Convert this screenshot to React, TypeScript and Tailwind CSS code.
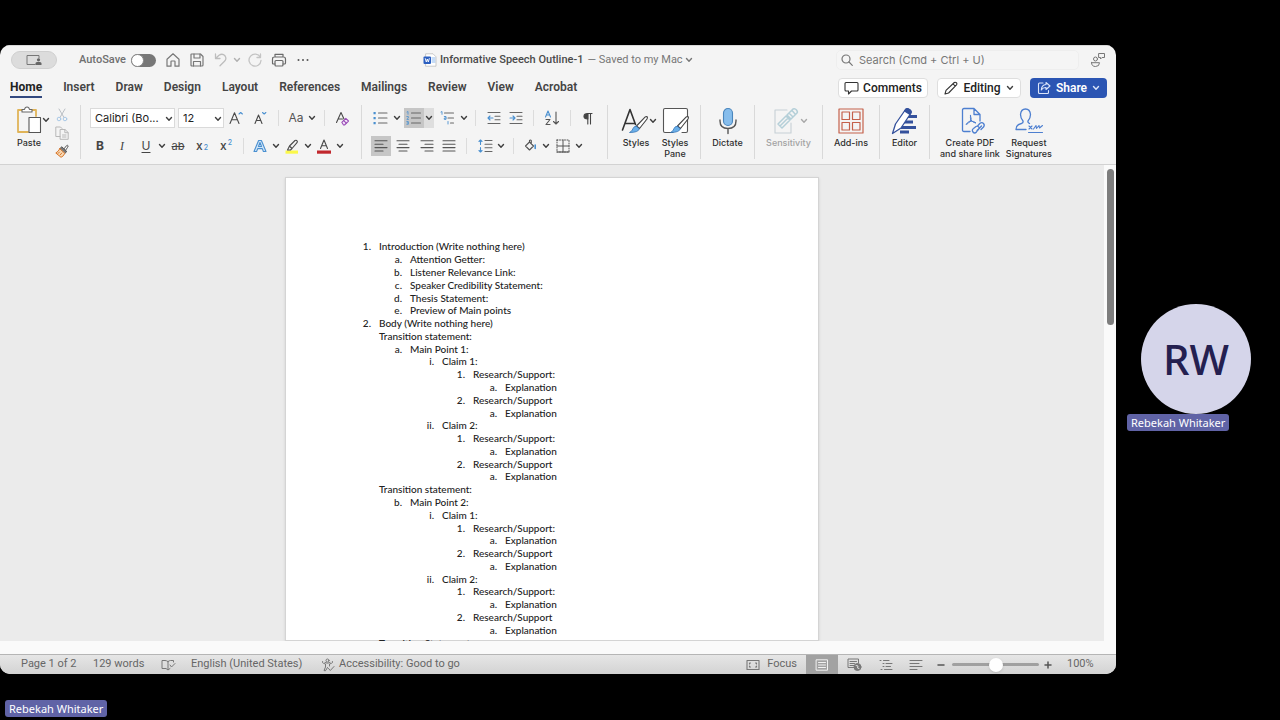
import type { ReactNode } from "react";

type IconProps = { w?: number; h?: number; box?: string; children: ReactNode; color?: string; sw?: number };

function Svg({ w = 16, h = 16, box, children, color = "#4a4a4a", sw = 1.1 }: IconProps) {
  return (
    <svg
      width={w}
      height={h}
      viewBox={box ?? `0 0 ${w} ${h}`}
      fill="none"
      stroke={color}
      strokeWidth={sw}
      strokeLinecap="round"
      strokeLinejoin="round"
      className="shrink-0"
      aria-hidden="true"
    >
      {children}
    </svg>
  );
}

function Chevron({ color = "#3f3f3f" }: { color?: string }) {
  return (
    <Svg w={8} h={6} color={color} sw={1.4}>
      <path d="M1.5 1.5 4 4.2 6.5 1.5" />
    </Svg>
  );
}

function Tool({ label, className, children }: { label: string; className: string; children: ReactNode }) {
  return (
    <button type="button" aria-label={label} className={`flex h-5 shrink-0 items-center justify-center ${className}`}>
      {children}
    </button>
  );
}

function Sep({ className }: { className: string }) {
  return (
    <span className={`flex shrink-0 justify-center ${className}`}>
      <span className="h-4 w-px bg-[#dcdcdc]" />
    </span>
  );
}

function Group({ className, children }: { className: string; children: ReactNode }) {
  return <div className={`flex shrink-0 border-r border-[#d9d9d9] ${className}`}>{children}</div>;
}

function BigButton({ lines, icon, className = "", muted = false, chevron = false }: {
  lines: string[];
  icon: ReactNode;
  className?: string;
  muted?: boolean;
  chevron?: boolean;
}) {
  return (
    <button
      type="button"
      className={`flex flex-col items-center text-[9px] leading-[11px] font-medium ${muted ? "text-[#a3a3a3]" : "text-[#2f2f2f]"} ${className}`}
    >
      <span className="flex h-8 items-center gap-px">
        {chevron && <span className="w-1" />}
        {icon}
        {chevron && <Chevron color={muted ? "#a8a8a8" : "#3f3f3f"} />}
      </span>
      <span className="flex flex-col whitespace-nowrap">
        {lines.map((l) => (
          <span key={l}>{l}</span>
        ))}
      </span>
    </button>
  );
}

const BLUE = "#4a90d0";

function AlignIcon({ rows }: { rows: [number, number][] }) {
  return (
    <Svg w={14} h={14} color="#555" sw={1.1}>
      {rows.map(([a, b], i) => (
        <path key={i} d={`M${a} ${1.8 + i * 3.4}H${b}`} />
      ))}
    </Svg>
  );
}

function TitleBar() {
  return (
    <div className="flex h-[28px] items-center">
      <div className="flex w-[423px] shrink-0 items-center pl-[11px]">
        <button type="button" aria-label="Presenter view" className="flex h-[18px] w-[46px] items-center justify-center rounded-full border border-[#cfcfcf] bg-[#dcdcdc]">
          <Svg w={18} h={12} color="#777" sw={1}>
            <path d="M10 10.5H2V1.5H14V4" />
            <circle cx="13.5" cy="5.8" r="1.6" fill="#666" stroke="none" />
            <path d="M10.5 11V9.6Q10.5 8 12 8H15Q16.500 8 16.500 9.600V11Z" fill="#666" stroke="none" />
          </Svg>
        </button>
        <span className="ml-[22px] w-[45px] text-[11px] font-medium whitespace-nowrap text-[#6f6f6f]">AutoSave</span>
        <button type="button" role="switch" aria-checked="false" aria-label="AutoSave" className="ml-[7px] flex h-[13px] w-[25px] items-center rounded-full bg-[#777]">
          <span className="size-[13px] rounded-full border border-[#888] bg-white" />
        </button>
        <Tool label="Home screen" className="ml-[5px] w-6">
          <Svg color="#777" sw={1.2}>
            <path d="M2 7.200 8 1.800 14 7.200V14.200H10V9.600Q10 9 9.400 9H6.600Q6 9 6 9.600V14.200H2Z" />
          </Svg>
        </Tool>
        <Tool label="Save" className="w-6">
          <Svg color="#777" sw={1.2}>
            <path d="M2.500 2H11.500L14 4.500V13Q14 14 13 14H3Q2 14 2 13V2.500Q2 2 2.500 2Z" />
            <path d="M5 2V6H11V2M4.500 14V9.500H11.500V14" />
          </Svg>
        </Tool>
        <Tool label="Undo" className="w-6">
          <Svg color="#bdbdbd" sw={1.3}>
            <path d="M2.500 2V6.500H7M2.800 6.200 6 3.200Q9.500 1 12 3.800 14 6.700 11.500 9.200L7 13.800" />
          </Svg>
        </Tool>
        <Tool label="Undo history" className="w-2">
          <Chevron color="#b0b0b0" />
        </Tool>
        <Tool label="Redo" className="ml-[2px] w-6">
          <Svg color="#c4c4c4" sw={1.3}>
            <path d="M13.500 2V5.500H10M13.300 5.300A6 6 0 1 0 14 8.500" />
          </Svg>
        </Tool>
        <Tool label="Print" className="w-6">
          <Svg color="#6a6a6a" sw={1.2}>
            <path d="M4 5V2.300H12V5M4 12H2.500Q1.500 12 1.500 11V7Q1.500 5 3.500 5H12.500Q14.500 5 14.500 7V11Q14.500 12 13.500 12H12" />
            <rect x="4" y="8.500" width="8" height="5.500" rx="1" />
          </Svg>
        </Tool>
        <Tool label="More" className="w-6">
          <Svg w={12} h={4} color="#555">
            <g fill="#555" stroke="none">
              <circle cx="1.500" cy="2" r="1" />
              <circle cx="6" cy="2" r="1" />
              <circle cx="10.500" cy="2" r="1" />
            </g>
          </Svg>
        </Tool>
      </div>
      <div className="flex flex-1 items-center text-[11px] whitespace-nowrap">
        <Svg w={14} h={14} sw={0.7} color="#b5b5b5">
          <path d="M3 .8H10L13 3.800V13.200H3Z" fill="#fff" />
          <path d="M9 5H12M9 7H12M9 9H12" stroke="#5b9be6" />
          <rect x="0.500" y="3.500" width="7.500" height="7.500" rx="1" fill="#2b5fc0" stroke="none" />
          <path d="M2.300 5.600 3.300 9 4.300 6 5.300 9 6.300 5.600" stroke="#fff" strokeWidth="0.900" />
        </Svg>
        <h1 className="ml-[3px] font-medium text-[#4a4a4a]">Informative Speech Outline-1</h1>
        <button type="button" className="ml-1 flex items-center gap-[2px] text-[#777]">
          — Saved to my Mac
          <Chevron color="#777" />
        </button>
      </div>
      <label className="flex h-5 w-[243px] shrink-0 items-center gap-[6px] rounded-[5px] border border-[#eeeeee] bg-[#f5f5f5] px-1">
        <Svg w={12} h={12} color="#777" sw={1.2}>
          <circle cx="5" cy="5" r="4" />
          <path d="m8 8 3.300 3.300" />
        </Svg>
        <input
          type="search"
          aria-label="Search"
          placeholder="Search (Cmd + Ctrl + U)"
          className="min-w-0 flex-1 bg-transparent font-[Inter,sans-serif] text-[11px] outline-none placeholder:text-[#777]"
        />
      </label>
      <Tool label="Account" className="mr-[6px] ml-[7px] w-6">
        <Svg color="#777" sw={1}>
          <circle cx="5.500" cy="7" r="2" />
          <path d="M1.500 10.700H9.500Q9.500 14.500 5.500 14.500T1.500 10.700ZM9 1.500H14.500V5.500H12L10.500 7V5.500H9Z" />
        </Svg>
      </Tool>
    </div>
  );
}

const tabs = ["Home", "Insert", "Draw", "Design", "Layout", "References", "Mailings", "Review", "View", "Acrobat"];

function TabBar() {
  return (
    <div className="flex h-[27px] items-center justify-between pr-[9px] pl-[10px]">
      <nav className="flex gap-[21px] text-[12px] font-semibold text-[#444]">
        {tabs.map((t, i) => (
          <a
            key={t}
            href={`#${t.toLowerCase()}`}
            className={`flex h-[21px] items-center border-b-2 ${i === 0 ? "border-[#33497f] font-bold text-[#222]" : "border-transparent"}`}
          >
            {t}
          </a>
        ))}
      </nav>
      <div className="flex gap-[9px] text-[12px] font-medium text-[#222]">
        <button type="button" className="flex h-5 w-[90px] items-center justify-center gap-[4px] rounded-[4px] border border-[#dedede] bg-white">
          <Svg w={15} h={14} color="#333">
            <path d="M2 1.500H13Q14 1.500 14 2.500V9Q14 10 13 10H7.500L4.500 13V10H2Q1 10 1 9V2.500Q1 1.500 2 1.500Z" />
          </Svg>
          Comments
        </button>
        <button type="button" className="flex h-5 w-[84px] items-center justify-center gap-[5px] rounded-[4px] border border-[#dedede] bg-white">
          <Svg w={14} h={14} color="#333">
            <path d="M1 13 2 9.300 10.300 1.500Q11.300 .8 12.400 1.700 13.300 2.800 12.500 3.800L4.600 12ZM9 2.800 11.300 5.100" />
          </Svg>
          Editing
          <Chevron />
        </button>
        <button type="button" className="flex h-5 w-[77px] items-center justify-center gap-[5px] rounded-[4px] bg-[#2b55b3] font-semibold text-white">
          <Svg w={14} h={14} color="#dbe5fa">
            <path d="M6 2H2.500Q1.500 2 1.500 3V11.500Q1.500 12.500 2.500 12.500H10.500Q11.500 12.500 11.500 11.500V9.500" />
            <path d="M9 1.500 13 5 9 8.500V6.500Q6 6.300 4.300 9 4.500 4 9 3.500Z" />
          </Svg>
          Share
          <Chevron color="#dbe5fa" />
        </button>
      </div>
    </div>
  );
}

function FontGroup() {
  return (
    <Group className="w-[281px] flex-col gap-2 pt-[3px] pl-[9px]">
      <div className="flex h-5 items-center">
        <div className="relative flex h-5">
          <select aria-label="Font" className="h-5 w-[85px] appearance-none border border-[#dadada] bg-white pl-1 text-[11px] text-[#222]">
            <option>Calibri (Bo...</option>
          </select>
          <span className="pointer-events-none absolute top-[8px] right-[2px]">
            <Chevron />
          </span>
        </div>
        <div className="relative ml-[3px] flex h-5">
          <select aria-label="Font size" className="h-5 w-[46px] appearance-none border border-[#dadada] bg-white pl-1 text-[11px] text-[#222]">
            <option>12</option>
          </select>
          <span className="pointer-events-none absolute top-[8px] right-[2px]">
            <Chevron />
          </span>
        </div>
        <Tool label="Grow font" className="w-6">
          <Svg w={14} h={14}>
            <path d="M1 12.500 5.500 1.800 10 12.500M2.600 8.800H8.400" />
            <path d="m10 3 1.700-1.500L13.400 3" stroke={BLUE} />
          </Svg>
        </Tool>
        <Tool label="Shrink font" className="w-6">
          <Svg w={14} h={14}>
            <path d="M2 12.500 5.500 4 9 12.500M3.300 9.500H7.700" />
            <path d="m9.500 1.500 1.700 1.500 1.700-1.500" stroke={BLUE} />
          </Svg>
        </Tool>
        <Sep className="w-3" />
        <Tool label="Change case" className="w-6 text-[12px] text-[#555]">Aa</Tool>
        <Tool label="Case options" className="w-2"><Chevron /></Tool>
        <Sep className="w-4" />
        <Tool label="Clear formatting" className="w-5">
          <Svg w={15} h={15}>
            <path d="M1.500 11.500 6 1.500 9 8M3 8H7.500" />
            <path d="m6.800 11.300 4-4 2.700 2.700-4 4H8.500Z" stroke="#9b4fb8" fill="#f6e9fb" />
            <path d="m8.600 9.500 2.700 2.700" stroke="#9b4fb8" />
          </Svg>
        </Tool>
      </div>
      <div className="flex h-5 items-center text-[12px] text-[#444]">
        <Tool label="Bold" className="w-5 font-bold">B</Tool>
        <Tool label="Italic" className="w-6 font-[Liberation_Serif,serif] italic">I</Tool>
        <Tool label="Underline" className="w-6 underline underline-offset-2">U</Tool>
        <Tool label="Underline style" className="w-2"><Chevron /></Tool>
        <Tool label="Strikethrough" className="w-6 text-[11px] line-through">ab</Tool>
        <Tool label="Subscript" className="w-6 gap-px font-medium">x<sub className="text-[7px] text-[#4a90d0]">2</sub></Tool>
        <Tool label="Superscript" className="w-6 gap-px font-medium">x<sup className="text-[7px] text-[#4a90d0]">2</sup></Tool>
        <Sep className="w-[10px]" />
        <Tool label="Text effects" className="w-6">
          <Svg w={14} h={14} color={BLUE} sw={1.1}>
            <path d="M1 12.500 5.600 1.500H8.400L13 12.500H10.400L9.300 9.600H4.700L3.600 12.500ZM5.500 7.500H8.500L7 3.500Z" fill="#cfe4f7" />
          </Svg>
        </Tool>
        <Tool label="Text effect options" className="w-2"><Chevron /></Tool>
        <Tool label="Highlight" className="w-6">
          <Svg w={14} h={15}>
            <rect x="0.500" y="11.500" width="12.500" height="3.200" fill="#fbf84a" stroke="none" />
            <path d="M4.500 7 10 1.500Q11.500 .8 12.300 2.200 12.500 3 12 3.700L7 9.500ZM4.500 7 3.500 9 2.500 11H5.500L7 9.500" />
          </Svg>
        </Tool>
        <Tool label="Highlight colour" className="w-2"><Chevron /></Tool>
        <Tool label="Font color" className="w-6">
          <Svg w={14} h={15}>
            <path d="M3.500 9.500 7 1 10.500 9.500M4.700 6.700H9.300" />
            <rect x="0" y="11.500" width="14" height="3.200" fill="#c1272d" stroke="none" />
          </Svg>
        </Tool>
        <Tool label="Font color options" className="w-2"><Chevron /></Tool>
      </div>
    </Group>
  );
}

function ParagraphGroup() {
  return (
    <Group className="w-[246px] flex-col gap-2 pt-[3px] pl-[7px]">
      <div className="flex h-5 items-center">
        <Tool label="Bullets" className="w-6">
          <Svg w={16} h={14} color="#666">
            <path d="M5.500 2H14M5.500 7H14M5.500 12H14" />
            <path d="M.5 1H2.700V3.200H.5ZM.5 6H2.700V8.200H.5ZM.5 11H2.700V13.200H.5Z" fill={BLUE} stroke="none" />
          </Svg>
        </Tool>
        <Tool label="Bullet styles" className="w-2"><Chevron /></Tool>
        <Tool label="Numbering" className="ml-[3px] w-5 bg-[#c6c6c6]">
          <Svg w={16} h={14} color="#666">
            <path d="M5.500 2H14.500M5.500 7H14.500M5.500 12H14.500" />
            <path d="M1 1 2 .5V3.300M.8 5.500H2.300V7L.8 8.400H2.500M.8 10.500H2.300V13.300H.8M1.200 11.900H2.300" stroke={BLUE} strokeWidth="0.800" />
          </Svg>
        </Tool>
        <Tool label="Number styles" className="w-[10px] bg-[#dedede]"><Chevron /></Tool>
        <Tool label="Multilevel list" className="ml-[2px] w-6">
          <Svg w={16} h={14} color="#666">
            <path d="M4.500 2H13.500M8 7H13.500M10.500 12H13.500" />
            <path d="M1 1 2 .5V3.300M4.300 5.500H6V8.400H4.300V7H6M8 10.500V13" stroke={BLUE} strokeWidth="0.900" />
          </Svg>
        </Tool>
        <Tool label="Multilevel styles" className="w-2"><Chevron /></Tool>
        <Sep className="w-[14px]" />
        <Tool label="Decrease indent" className="w-6">
          <Svg w={14} h={14} color="#666">
            <path d="M1 1.500H13M8 5.200H13M8 8.800H13M1 12.500H13" />
            <path d="M6 7H1M3 5 1 7 3 9" stroke={BLUE} />
          </Svg>
        </Tool>
        <Tool label="Increase indent" className="w-5">
          <Svg w={14} h={14} color="#666">
            <path d="M1 1.500H13M8 5.200H13M8 8.800H13M1 12.500H13" />
            <path d="M1 7H6M4 5 6 7 4 9" stroke={BLUE} />
          </Svg>
        </Tool>
        <Sep className="w-[14px]" />
        <Tool label="Sort" className="w-6">
          <Svg w={16} h={16} color="#555">
            <path d="M1.500 7 4 1 6.500 7M2.400 5H5.600" stroke={BLUE} />
            <path d="M2 9.500H6L2 14.500H6M12 2V14M9.500 11.500 12 14 14.500 11.500" />
          </Svg>
        </Tool>
        <Sep className="w-3" />
        <Tool label="Show formatting marks" className="w-6">
          <Svg w={10} h={13} color="#444">
            <path d="M4.800 1.500V12M7.500 1.500V12M4.500 1.500H9" />
            <path d="M4.800 1.500Q1 1.500 1 4.200T4.800 7Z" fill="#444" />
          </Svg>
        </Tool>
      </div>
      <div className="flex h-5 items-center">
        <Tool label="Align left" className="ml-[2px] w-5 bg-[#c6c6c6]">
          <AlignIcon rows={[[1, 13], [1, 9], [1, 13], [1, 9]]} />
        </Tool>
        <Tool label="Align center" className="w-6">
          <AlignIcon rows={[[1, 13], [3, 11], [1, 13], [3, 11]]} />
        </Tool>
        <Tool label="Align right" className="w-6">
          <AlignIcon rows={[[1, 13], [5, 13], [1, 13], [5, 13]]} />
        </Tool>
        <Tool label="Justify" className="w-5">
          <AlignIcon rows={[[1, 13], [1, 13], [1, 13], [1, 13]]} />
        </Tool>
        <Sep className="w-[14px]" />
        <Tool label="Line spacing" className="w-6">
          <Svg w={15} h={14} color="#666">
            <path d="M7 1.500H14M7 5.200H14M7 8.800H14M7 12.500H14" />
            <path d="M2.500 1V5.500M1 2.500 2.500 1 4 2.500M2.500 8.500V13M1 11.500 2.500 13 4 11.500" stroke={BLUE} />
          </Svg>
        </Tool>
        <Tool label="Line spacing options" className="w-2"><Chevron /></Tool>
        <Sep className="w-4" />
        <Tool label="Shading" className="w-5">
          <Svg w={14} h={14} color="#555">
            <path d="M5.500 3 1.500 7 5.500 11 9.500 7ZM5.500 3V1.500Q6.500 .5 7.300 1.500V5" />
            <path d="M11.200 6V9.500" stroke={BLUE} strokeWidth="1.600" />
          </Svg>
        </Tool>
        <Tool label="Shading options" className="w-[10px]"><Chevron /></Tool>
        <Tool label="Borders" className="w-6">
          <Svg w={14} h={14} color="#555" sw={1}>
            <path d="M1 1H13V13H1Z" strokeDasharray="1 1.500" />
            <path d="M1 7H13M7 1V13M1 13H13" />
          </Svg>
        </Tool>
        <Tool label="Border options" className="w-2"><Chevron /></Tool>
      </div>
    </Group>
  );
}

function Brush() {
  return (
    <>
      <path d="M25.500 9.500Q27 9.700 26 12L18.500 21.500 15.500 19 24 10.200Q24.700 9.500 25.500 9.500Z" fill="#fff" stroke="#444" />
      <path d="M15.300 19.300 18.300 21.800Q17.500 25.500 8.500 25.500 11.500 24 12 21.500 13 19 15.300 19.300Z" fill="#6bb0ea" stroke="#3473b5" strokeWidth="0.800" />
    </>
  );
}

function Ribbon() {
  return (
    <div className="flex h-[64px] border-b border-[#d2d2d2] pt-1 pb-[5px] font-[Inter,sans-serif]">
      <Group className="w-[81px] pl-[11px]">
        <div className="flex">
          <button type="button" className="flex w-9 flex-col items-center gap-[2px] text-[9px] leading-[11px] font-medium text-[#2f2f2f]">
            <Svg w={26} h={30}>
              <path d="M6 5H2V27H12" stroke="#e0b458" strokeWidth="1.800" />
              <path d="M16 5H20V11" stroke="#e0b458" strokeWidth="1.800" />
              <path d="M6 7V4.500H8.500Q9 2 11 2T13.500 4.500H16V7Z" fill="#fff" stroke="#666" />
              <rect x="13" y="12.500" width="11.500" height="15" fill="#fff" stroke="#555" />
            </Svg>
            Paste
          </button>
          <Tool label="Paste options" className="mt-[5px] -ml-[6px] w-[10px]"><Chevron /></Tool>
        </div>
        <div className="ml-[3px] flex flex-col">
          <Tool label="Cut" className="w-4">
            <Svg w={12} h={14} color="#b9bec4" sw={1}>
              <path d="M3 1 8 9.500M9 1 4 9.500" />
              <circle cx="3" cy="11" r="1.800" stroke="#a9c8e6" />
              <circle cx="9" cy="11" r="1.800" stroke="#a9c8e6" />
            </Svg>
          </Tool>
          <Tool label="Copy" className="-mt-[2px] w-4">
            <Svg w={14} h={14} color="#b8b8b8" sw={1}>
              <path d="M5 10.500H.8V1H5.500L7 2.500" />
              <path d="M5.500 3.500H10L13.200 6.500V13.300H5.500ZM9.800 3.500V6.700H13M7.500 9H11M7.500 11H11" />
            </Svg>
          </Tool>
          <Tool label="Format painter" className="-mt-[2px] w-4">
            <Svg w={14} h={14} sw={1} color="#555">
              <path d="M9 4.800 11.600 1.600Q12.600 .9 13.200 1.900 13.300 2.500 10.600 6.300" fill="#fff" />
              <path d="M5 4.500 6.800 2.800 11.800 7.500 10 9.300Z" fill="#777" />
              <path d="M4.800 4.800 9.800 9.300Q8.500 12.500 6 13.300L.8 9Q3.500 7.500 4.800 4.800Z" fill="#f7d9b5" stroke="#d9772b" />
              <path d="M3 9.500 4.500 8M5 11 6.800 9" stroke="#d9772b" />
            </Svg>
          </Tool>
        </div>
      </Group>
      <FontGroup />
      <ParagraphGroup />
      <Group className="w-[93px] gap-[2px] pl-[9px]">
        <BigButton
          className="w-[38px]"
          lines={["Styles"]}
          chevron
          icon={
            <Svg w={27} h={28}>
              <path d="M1.500 23 9 2.500 14.500 17.500M4 16.500H13" stroke="#333" strokeWidth="1.600" />
              <Brush />
            </Svg>
          }
        />
        <BigButton
          className="w-[36px]"
          lines={["Styles", "Pane"]}
          icon={
            <Svg w={27} h={28}>
              <path d="M11 25.500H3Q1.500 25.500 1.500 24V3Q1.500 1.500 3 1.500H24Q25.500 1.500 25.500 3V24Q25.500 25.500 24 25.500H20" fill="#fff" stroke="#555" />
              <Brush />
            </Svg>
          }
        />
      </Group>
      <Group className="w-[54px] justify-center">
        <BigButton
          lines={["Dictate"]}
          icon={
            <Svg w={20} h={28}>
              <rect x="5.500" y="1.500" width="9" height="17" rx="4.500" fill="#86bdec" stroke="#4a86bd" />
              <path d="M2 13V14Q2 21.500 10 21.500T18 14V13M10 21.500V26.500" stroke="#555" strokeWidth="1.400" />
            </Svg>
          }
        />
      </Group>
      <Group className="w-[68px] justify-center">
        <BigButton
          lines={["Sensitivity"]}
          muted
          chevron
          icon={
            <Svg w={26} h={28} color="#c6d0d5">
              <path d="M14 3H2V26H18V16" />
              <path d="M5 17 13 9 17 13 9 21ZM7 19 15 11M14 8 20 2Q22 1 23.500 3T24 6L18 12ZM16 6 20 10M19 3.500 22.500 7.500" stroke="#b4cfd8" strokeWidth="1.500" />
            </Svg>
          }
        />
      </Group>
      <Group className="w-[57px] justify-center">
        <BigButton
          lines={["Add-ins"]}
          icon={
            <Svg w={26} h={26} color="#c4604a" sw={1.2}>
              <path d="M1 1H25V25H1ZM4 4H11.500V11.500H4ZM14.500 4H22V11.500H14.500ZM4 14.500H11.500V22H4ZM14.500 14.500H22V22H14.500Z" />
            </Svg>
          }
        />
      </Group>
      <Group className="w-[50px] justify-center">
        <BigButton
          lines={["Editor"]}
          icon={
            <Svg w={28} h={28} color="#34519c">
              <path d="M16 9.500H26M13 15H22M10 20.500H25M9 25H18" strokeWidth="3" strokeLinecap="butt" />
              <path d="M1.500 26.500 4.500 17 14.500 2.500Q16 1 18.500 2.500T20 6L10 21Z" fill="#fff" strokeWidth="1.300" />
              <path d="M13.500 4 19 7.500 20 5.500Q20 3 17.500 2 15.500 1.300 14.700 2.300Z" fill="#34519c" />
            </Svg>
          }
        />
      </Group>
      <div className="flex gap-[6px] pl-[10px]">
        <BigButton
          lines={["Create PDF", "and share link"]}
          icon={
            <span className="flex pl-[6px]">
              <Svg w={26} h={28} color="#4d7fd0" sw={1.3}>
                <path d="M10 24.500H4Q2.500 24.500 2.500 23V3Q2.500 1.500 4 1.500H14L20 7.500V14M14 1.500V7.500H20" />
                <path d="M10.500 8.500Q12 12 10 14.500 8 17 6 17.500 7.500 14.500 11 14.200 14 14 16 16 13 16 11 13 10 10.500 10.500 8.500Z" strokeWidth="1" />
                <path d="M18 18.500 20 16.300Q22 15 23.500 16.500T23.500 20L21 22.500M20 20.500 17.500 23.500 16.500 25Q14.500 27 13 25T13.500 21.500L16 19.500Q18 18.500 19 20.500M17 23.500 21.500 19" />
              </Svg>
            </span>
          }
        />
        <BigButton
          lines={["Request", "Signatures"]}
          icon={
            <Svg w={30} h={28} color="#4d7fd0" sw={1.3}>
              <path d="M12 22.500H2Q2 17.500 7.500 16.500 9.500 15.700 9 14 6.500 11 6.500 7.500 7 2 11.500 2T16.500 7.500Q16.500 11 14 14 13.500 15.500 15.500 16.500" />
              <path d="M15 19 18 22M18 19 15 22M19.500 22 22 18.500 22.500 21.500 25 18.500 25.500 21 28.500 18.500M14.500 25.500H28.500" strokeWidth="1.100" />
            </Svg>
          }
        />
      </div>
    </div>
  );
}

type Line = [level: number, marker: string, text: string];

const claim = (n: string, label: string): Line[] => [
  [2, n, label],
  [3, "1.", "Research/Support:"],
  [4, "a.", "Explanation"],
  [3, "2.", "Research/Support"],
  [4, "a.", "Explanation"],
];

const outline: Line[] = [
  [0, "1.", "Introduction (Write nothing here)"],
  [1, "a.", "Attention Getter:"],
  [1, "b.", "Listener Relevance Link:"],
  [1, "c.", "Speaker Credibility Statement:"],
  [1, "d.", "Thesis Statement:"],
  [1, "e.", "Preview of Main points"],
  [0, "2.", "Body (Write nothing here)"],
  [0, "", "Transition statement:"],
  [1, "a.", "Main Point 1:"],
  ...claim("i.", "Claim 1:"),
  ...claim("ii.", "Claim 2:"),
  [0, "", "Transition statement:"],
  [1, "b.", "Main Point 2:"],
  ...claim("i.", "Claim 1:"),
  ...claim("ii.", "Claim 2:"),
  [0, "", "Transition Statement:"],
];

const indents = ["pl-0", "pl-[31px]", "pl-[63px]", "pl-[94px]", "pl-[126px]"];

function DocumentArea() {
  return (
    <div className="flex min-h-0 flex-1 bg-[#fafafa] pb-[13px]">
      <main className="flex flex-1 justify-center overflow-hidden bg-[#ebebeb] pt-3">
        <article className="w-[534px] border border-[#d4d4d4] bg-white px-[72px] pt-[62px] shadow-sm">
          <ul className="grid h-[409px] auto-rows-fr font-[Lato,Carlito,sans-serif] text-[10px] font-medium text-[#222]">
            {outline.map(([level, marker, text], i) => (
              <li key={i} className={`flex items-center gap-2 leading-3 whitespace-nowrap ${indents[level]}`}>
                <span className="flex w-[13px] justify-end">{marker}</span>
                <span>{text}</span>
              </li>
            ))}
          </ul>
        </article>
      </main>
      <div className="flex w-3 justify-center pt-1">
        <div className="h-[156px] w-[7px] rounded-full bg-[#7d7d7d]" />
      </div>
    </div>
  );
}

function StatusBar() {
  return (
    <footer className="flex h-5 items-center border-t border-[#b5b5b5] bg-linear-to-b from-[#e6e6e6] to-[#d3d3d3] text-[11px] whitespace-nowrap text-[#666]">
      <span className="w-[93px] pl-[21px]">Page 1 of 2</span>
      <span className="w-[67px]">129 words</span>
      <Tool label="Proofing" className="w-4">
        <Svg w={15} h={12} color="#777" sw={1}>
          <path d="M7 2.500V10.500M7 2.500Q5.500 1.500 4 1.500H1V9.500H5L7 11 9 9.500M7 2.500Q8.500 1.500 9.500 1.500H12.500V3M9 6 10.500 8 14 4.500" />
        </Svg>
      </Tool>
      <span className="ml-[15px] w-[130px]">English (United States)</span>
      <button type="button" className="flex items-center gap-1">
        <Svg w={14} h={14} color="#777" sw={1}>
          <circle cx="6.500" cy="2.500" r="1.500" />
          <path d="M1.500 3.500Q1 5 2.500 5.300L4.500 6V9L3 12.500Q4.500 13.500 5 12L6.500 9.500M11.500 3.500Q12 5 10.500 5.300L8.500 6V8M4 4.500 6.500 5.200 9 4.500M7.500 10.500 9.300 12.500 13 8.500" />
        </Svg>
        Accessibility: Good to go
      </button>
      <div className="ml-auto flex h-full items-center">
        <button type="button" className="mr-[9px] flex items-center gap-[7px]">
          <Svg w={14} h={12} color="#777" sw={1.1}>
            <path d="M1 1.500H13V10.500H1ZM3.500 5V4H4.500M9.500 4H10.500V5M3.500 7V8H4.500M9.500 8H10.500V7" />
          </Svg>
          Focus
        </button>
        <button type="button" aria-label="Print layout" className="flex h-full w-8 items-center justify-center bg-[#a2a2a2]">
          <Svg w={14} h={12} color="#f2f2f2" sw={1}>
            <path d="M1.500 .8H12.500V11.200H1.500ZM3.500 3.500H10.500M3.500 6H10.500M3.500 8.500H10.500" />
          </Svg>
        </button>
        <Tool label="Web layout" className="w-8">
          <Svg w={15} h={13} color="#777" sw={1}>
            <path d="M7 9.500H1V1H11.500V5M3 3.500H9.500M3 5.500H7.500M3 7.500H7" />
            <circle cx="10.500" cy="9" r="3.500" fill="#777" />
            <path d="M9 7.500 11 8 10.500 10 12 10.500" stroke="#ddd" />
          </Svg>
        </Tool>
        <Tool label="Outline view" className="w-8">
          <Svg w={14} h={12} color="#777" sw={1}>
            <path d="M1 1.500H2M4.500 1.500H10M4 4.500H5M7 4.500H13M4 7.500H5M7 7.500H11.500M2 10.500H3M5.500 10.500H13" />
          </Svg>
        </Tool>
        <Tool label="Draft view" className="w-7">
          <Svg w={14} h={12} color="#777" sw={1.1}>
            <path d="M1 1.500H13M1 4.500H10M1 7.500H13M1 10.500H8" />
          </Svg>
        </Tool>
        <Tool label="Zoom out" className="w-[22px]">
          <Svg w={8} h={8} color="#555" sw={1.5}><path d="M1 4H7" /></Svg>
        </Tool>
        <input
          type="range"
          aria-label="Zoom"
          min={0}
          max={100}
          defaultValue={50}
          className="h-[3px] w-[87px] appearance-none rounded-full bg-[#a0a0a0] [&::-webkit-slider-thumb]:size-[14px] [&::-webkit-slider-thumb]:appearance-none [&::-webkit-slider-thumb]:rounded-full [&::-webkit-slider-thumb]:bg-white [&::-webkit-slider-thumb]:shadow"
        />
        <Tool label="Zoom in" className="w-[18px]">
          <Svg w={8} h={8} color="#555" sw={1.5}><path d="M1 4H7M4 1V7" /></Svg>
        </Tool>
        <span className="w-[59px] pl-[10px]">100%</span>
      </div>
    </footer>
  );
}

function NameTag() {
  return (
    <span className="rounded-[3px] bg-[#6063a6] px-1 font-[Noto_Sans,sans-serif] text-[11px] leading-[17px] whitespace-nowrap text-white">
      Rebekah Whitaker
    </span>
  );
}

export default function App() {
  return (
    <div className="flex h-screen flex-col overflow-hidden bg-black pt-[45px] font-[Roboto,sans-serif]">
      <div className="flex min-h-0 flex-1">
        <section aria-label="Shared screen" className="flex min-w-0 flex-1 flex-col overflow-hidden rounded-[10px] bg-[#f4f4f4]">
          <header className="border-t border-[#d8d8d8]">
            <TitleBar />
            <TabBar />
            <Ribbon />
          </header>
          <DocumentArea />
          <StatusBar />
        </section>
        <aside className="flex w-[164px] shrink-0 flex-col items-start justify-center pt-[15px] pl-[11px]">
          <div className="ml-[14px] flex size-[110px] items-center justify-center rounded-full bg-[#d5d5ea] font-[Noto_Sans,sans-serif] text-[42px] font-medium text-[#242050]">
            RW
          </div>
          <NameTag />
        </aside>
      </div>
      <div className="flex h-[46px] shrink-0 items-end px-[5px] pb-[3px]">
        <NameTag />
      </div>
    </div>
  );
}
